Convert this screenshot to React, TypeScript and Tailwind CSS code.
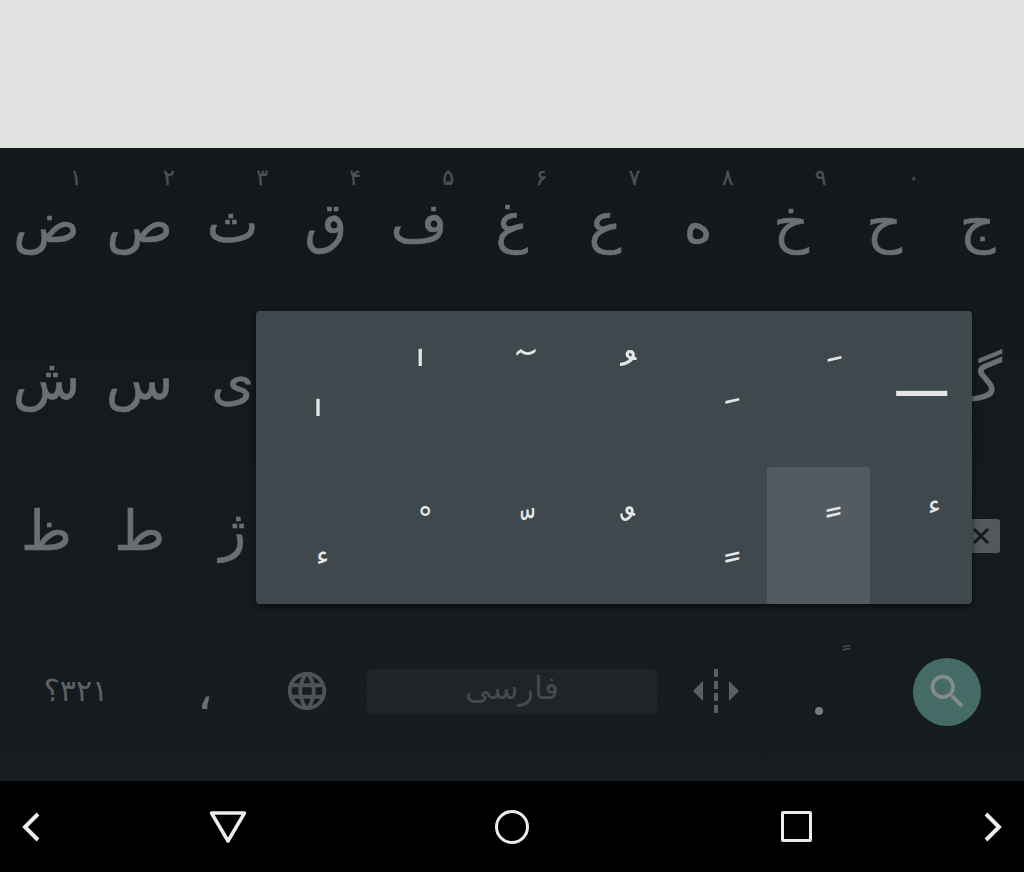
const topRow = [
	{ c: "ض", n: "۱" },
	{ c: "ص", n: "۲" },
	{ c: "ث", n: "۳" },
	{ c: "ق", n: "۴" },
	{ c: "ف", n: "۵" },
	{ c: "غ", n: "۶" },
	{ c: "ع", n: "۷" },
	{ c: "ه", n: "۸" },
	{ c: "خ", n: "۹" },
	{ c: "ح", n: "۰" },
	{ c: "ج", n: "" },
];
const midRow = ["ش", "س", "ی", "ب", "ل", "ا", "ت", "ن", "م", "ک", "گ"];
const lowRow = ["ظ", "ط", "ژ", "ز", "ر", "ذ", "د", "پ", "و", "چ"];

// popup keys, the glyph sits off-centre in each one
const popupTop = [
	{ c: "\u00a0\u0670", cls: "text-[60px] pt-[90px] pl-[47px]" },
	{ c: "\u00a0\u0670", cls: "text-[60px] pt-[40px] pl-[47px]" },
	{ c: "\u00a0\u0653", cls: "text-[54px] pt-[32px] pl-[52px]" },
	{ c: "\u00a0\u064f", cls: "text-[58px] pt-[40px] pl-[51px]" },
	{ c: "\u00a0\u064e", cls: "text-[48px] pt-[80px] pl-[55px]" },
	{ c: "\u00a0\u064e", cls: "text-[48px] pt-[38px] pl-[55px]" },
	{ c: "ـــ", cls: "text-[57px] pt-[37px] pl-[27px]" },
];
const popupBottom = [
	{ c: "ء", cls: "text-[28px] pt-[75px] pl-[60px]" },
	{ c: "\u00a0\u0652", cls: "text-[36px] pt-[41px] pl-[58px]" },
	{ c: "\u00a0\u0651", cls: "text-[44px] pt-[42px] pl-[56px]" },
	{ c: "\u00a0\u064c", cls: "text-[52px] pt-[41px] pl-[52px]" },
	{ c: "\u00a0\u064b", cls: "text-[48px] pt-[83px] pl-[55px]" },
	{ c: "\u00a0\u064b", cls: "text-[48px] pt-[38px] pl-[54px]" },
	{ c: "ء", cls: "text-[28px] pt-[24px] pl-[58px]" },
];

const LetterKey = ({ c, n }: { c: string; n?: string }) => (
	<div className="relative flex items-center justify-center text-[55px] leading-none text-[#6c6f71] [-webkit-text-stroke:0.6px]">
		{n && <span className="absolute top-[19px] left-[70px] text-[22px] leading-none text-[#4d5153] [-webkit-text-stroke:0.3px]">{n}</span>}
		<span>{c}</span>
	</div>
);

const PopupKey = ({ c, cls, active }: { c: string; cls: string; active?: boolean }) => (
	<div className={"leading-none text-[#e4e6e6] rounded-[3px] " + cls + (active ? " bg-[#525c60]" : "")}>{c}</div>
);

export default function App() {
	return (
		<div className="relative flex flex-col h-[872px] w-[1024px] overflow-hidden font-['DejaVu_Sans',sans-serif]">
			<div className="h-[148px] bg-[#e2e2e0]"></div>
			<div className="relative flex flex-col h-[633px] bg-gradient-to-b from-[#13181c] to-[#171c20]">
				<div className="grid grid-cols-11 h-[155px] pb-[4px]">
					{topRow.map(k => <LetterKey key={k.c} c={k.c} n={k.n} />)}
				</div>
				<div className="grid grid-cols-11 h-[155px]">
					{midRow.map(c => <LetterKey key={c} c={c} />)}
				</div>
				<div className="grid grid-cols-11 h-[155px] pb-[8px]">
					{lowRow.map(c => <LetterKey key={c} c={c} />)}
					<div className="flex items-center justify-end pr-[24px] pt-[8px]">
						<svg width="50" height="34" viewBox="0 0 50 34">
							<path d="M12 0H47a3 3 0 0 1 3 3V31a3 3 0 0 1-3 3H12L0 17Z" fill="#54585a" />
							<path d="M24 10l14 14M38 10L24 24" stroke="#15191c" strokeWidth="3" fill="none" />
						</svg>
					</div>
				</div>
				<div className="grid grid-cols-[152px_106px_98px_11px_290px_10px_98px_108px_151px] items-center h-[168px] pb-[12px]">
					<bdo dir="ltr" className="text-center text-[30px] leading-none text-[#5f6264]">؟۳۲۱</bdo>
					<div className="text-center text-[52px] leading-[60px] text-[#6c6f71]">،</div>
					<div className="flex justify-center">
						<svg width="46" height="46" viewBox="0 0 24 24" fill="#4f5355">
							<path d="M11.99 2C6.47 2 2 6.48 2 12s4.47 10 9.99 10C17.52 22 22 17.52 22 12S17.52 2 11.99 2zm6.93 6h-2.95c-.32-1.25-.78-2.45-1.38-3.56 1.84.63 3.37 1.91 4.33 3.56zM12 4.04c.83 1.2 1.48 2.53 1.91 3.96h-3.82c.43-1.43 1.08-2.76 1.91-3.96zM4.26 14C4.1 13.36 4 12.69 4 12s.1-1.36.26-2h3.38c-.08.66-.14 1.32-.14 2 0 .68.06 1.34.14 2H4.26zm.82 2h2.95c.32 1.25.78 2.45 1.38 3.56-1.84-.63-3.37-1.9-4.33-3.56zm2.95-8H5.08c.96-1.66 2.49-2.93 4.33-3.56C8.81 5.55 8.35 6.75 8.03 8zM12 19.96c-.83-1.2-1.48-2.53-1.91-3.96h3.82c-.43 1.43-1.08 2.76-1.91 3.96zM14.34 14H9.66c-.09-.66-.16-1.32-.16-2 0-.68.07-1.35.16-2h4.68c.09.65.16 1.32.16 2 0 .68-.07 1.34-.16 2zm.25 5.56c.6-1.11 1.06-2.31 1.38-3.56h2.95c-.96 1.65-2.49 2.93-4.33 3.56zM16.36 14c.08-.66.14-1.32.14-2 0-.68-.06-1.34-.14-2h3.38c.16.64.26 1.31.26 2s-.1 1.36-.26 2h-3.38z" />
						</svg>
					</div>
					<div></div>
					<div dir="rtl" className="flex items-center justify-center h-[45px] pb-[6px] rounded-[6px] bg-[#1f2427] text-[32px] leading-none text-[#45494b]">فارسی</div>
					<div></div>
					<div className="flex justify-center">
						<svg width="46" height="44" viewBox="0 0 46 44" fill="#5c5f61">
							<path d="M0 22L10 12V32Z" />
							<path d="M46 22L36 12V32Z" />
							<path d="M21 0h4v8h-4zM21 12h4v8h-4zM21 24h4v8h-4zM21 36h4v8h-4z" />
						</svg>
					</div>
					<div className="relative flex justify-center">
						<span className="absolute -top-[23px] left-[75px] text-[26px] leading-none text-[#4b4f51]">{"\u00a0\u064b"}</span>
						<span className="mt-[40px] size-[8px] rounded-full bg-[#77797a]"></span>
					</div>
					<div className="flex justify-start pl-[40px] pt-[1px]">
						<div className="flex items-center justify-center size-[68px] rounded-full bg-[#456b67]">
							<svg width="45" height="45" viewBox="0 0 24 24" fill="#858b8a">
								<path d="M15.5 14h-.79l-.28-.27C15.41 12.59 16 11.11 16 9.5 16 5.91 13.09 3 9.5 3S3 5.91 3 9.5 5.91 16 9.5 16c1.61 0 3.09-.59 4.23-1.57l.27.28v.79l5 4.99L20.49 19l-4.99-5zm-6 0C7.01 14 5 11.99 5 9.5S7.01 5 9.5 5 14 7.01 14 9.5 11.99 14 9.5 14z" />
							</svg>
						</div>
					</div>
				</div>
				<div className="absolute top-[163px] left-[256px] grid grid-cols-7 grid-rows-[156px_137px] w-[716px] h-[293px] rounded-[4px] bg-[#3e484d] shadow-[0_2px_6px_rgba(0,0,0,0.6)] overflow-hidden">
					{popupTop.map((k, i) => <PopupKey key={i} c={k.c} cls={k.cls} />)}
					{popupBottom.map((k, i) => <PopupKey key={i} c={k.c} cls={k.cls} active={i === 5} />)}
				</div>
			</div>
			<div className="grid grid-cols-[62px_332px_236px_332px_62px] items-center h-[91px] bg-black">
				<div className="flex justify-center">
					<svg width="22" height="30" viewBox="0 0 22 30" fill="none" stroke="#ececec" strokeWidth="4">
						<path d="M18 2L5 15L18 28" />
					</svg>
				</div>
				<div className="flex justify-center">
					<svg width="38" height="34" viewBox="0 0 38 34" fill="none" stroke="#ececec" strokeWidth="3.5" strokeLinejoin="round">
						<path d="M2.5 3H35.5L19 31Z" />
					</svg>
				</div>
				<div className="flex justify-center">
					<span className="size-[34px] rounded-full border-[3.5px] border-[#ececec]"></span>
				</div>
				<div className="flex justify-center">
					<span className="size-[31px] rounded-[2px] border-[3.5px] border-[#ececec]"></span>
				</div>
				<div className="flex justify-center">
					<svg width="22" height="30" viewBox="0 0 22 30" fill="none" stroke="#ececec" strokeWidth="4">
						<path d="M4 2L17 15L4 28" />
					</svg>
				</div>
			</div>
		</div>
	);
}
